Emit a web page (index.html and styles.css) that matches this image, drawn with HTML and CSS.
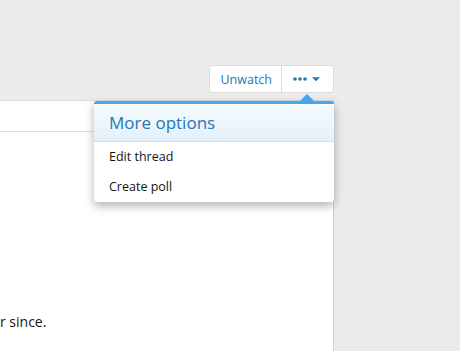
FILE: index.html
```html
<!DOCTYPE html>
<html lang="en">
<head>
  <meta charset="UTF-8">
  <meta name="viewport" content="width=device-width, initial-scale=1.0">
  <title>Thread</title>
  <link rel="stylesheet" href="styles.css">
</head>
<body>

  <div class="page">
    <!-- thread actions -->
    <div class="thread-head">
      <div class="btn-group">
        <button class="btn">Unwatch</button>
        <button class="btn btn-more" aria-label="More options">
          <svg width="28" height="8" viewBox="0 0 28 8">
            <circle cx="2" cy="4" r="1.8" fill="#2577b1"/>
            <circle cx="7" cy="4" r="1.8" fill="#2577b1"/>
            <circle cx="12" cy="4" r="1.8" fill="#2577b1"/>
            <path d="M19 2.3 L27 2.3 L23 6.3 Z" fill="#2577b1"/>
          </svg>
        </button>
      </div>
    </div>

    <div class="panel">
      <div class="panel-tabs"></div>
      <div class="panel-body">
        <p>r since.</p>
      </div>
    </div>

    <!-- More options menu -->
    <div class="menu">
      <span class="menu-arrow"></span>
      <h3 class="menu-header">More options</h3>
      <a class="menu-item" href="#">Edit thread</a>
      <a class="menu-item" href="#">Create poll</a>
    </div>
  </div>

</body>
</html>
```

FILE: styles.css
```css
body {
  margin: 0;
  padding: 0;
  background-color: #ebebeb;
  font-family: 'Open Sans', 'Noto Sans', sans-serif;
  color: #141414;
  overflow: hidden;
}

.page {
  position: relative;
  height: 351px;
}

.thread-head {
  display: flex;
  justify-content: flex-end;
  width: 334px;
  padding-top: 65px;
  margin-bottom: 7px;
}

.btn-group {
  display: flex;
  background-color: white;
  border: 1px solid #dcdcdc;
  border-radius: 3px;
  height: 26px;
}

.btn {
  background: none;
  border: none;
  padding: 0 9px 0 10px;
  font-family: inherit;
  font-size: 12.5px;
  color: #2577b1;
  cursor: pointer;
  display: flex;
  align-items: center;
}

.btn-more {
  border-left: 1px solid #dcdcdc;
  padding: 0 12px 0 11px;
}

.panel {
  width: 333px;
  height: 250px;
  background-color: white;
  border-top: 1px solid #dcdcdc;
  border-right: 1px solid #d0d0d0;
}

.panel-tabs {
  height: 30px;
  border-bottom: 1px solid #dcdcdc;
}

.panel-body p {
  margin: 180px 0 0;
  font-size: 14px;
  line-height: 20px;
}

/* Popup menu */
.menu {
  position: absolute;
  top: 101px;
  left: 94px;
  width: 240px;
  background-color: white;
  border-top: 3px solid #47a7eb;
  border-radius: 3px;
  box-shadow: 0 4px 10px rgba(0, 0, 0, 0.3);
}

.menu-arrow {
  position: absolute;
  top: -10px;
  left: 206px;
  width: 0;
  height: 0;
  border-left: 7px solid transparent;
  border-right: 7px solid transparent;
  border-bottom: 7px solid #47a7eb;
}

.menu-header {
  margin: 0;
  padding: 7px 15px 7px;
  font-size: 17px;
  font-weight: normal;
  line-height: 23px;
  color: #2577b1;
  background: linear-gradient(to bottom, #f6fbfe, #e2f0fb);
  border-bottom: 1px solid #d3e0ea;
}

.menu-item {
  display: block;
  padding: 0 15px;
  height: 30px;
  line-height: 30px;
  font-size: 12.5px;
  color: #141414;
  text-decoration: none;
}
```
